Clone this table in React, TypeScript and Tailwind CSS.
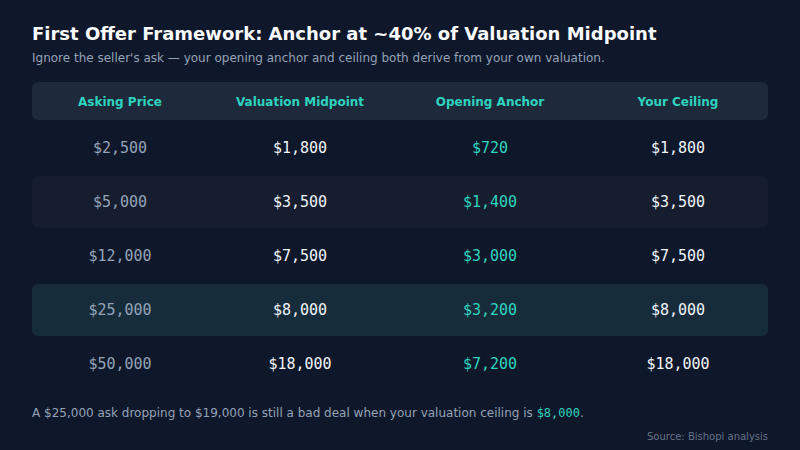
const rows = [
  { ask: "$2,500", mid: "$1,800", anchor: "$720", ceiling: "$1,800", tone: "none" },
  { ask: "$5,000", mid: "$3,500", anchor: "$1,400", ceiling: "$3,500", tone: "alt" },
  { ask: "$12,000", mid: "$7,500", anchor: "$3,000", ceiling: "$7,500", tone: "none" },
  { ask: "$25,000", mid: "$8,000", anchor: "$3,200", ceiling: "$8,000", tone: "hl" },
  { ask: "$50,000", mid: "$18,000", anchor: "$7,200", ceiling: "$18,000", tone: "none" },
];

const cols = "grid grid-cols-[176px_184px_196px_180px]";

export default function App() {
  return (
    <div className="w-[800px] h-[450px] bg-[#0f172a] px-8 pt-[22px] font-['DejaVu_Sans',sans-serif] overflow-hidden">
      <h1 className="text-[18px] leading-[24px] font-bold text-[#f8fafc]">
        First Offer Framework: Anchor at ~40% of Valuation Midpoint
      </h1>
      <p className="mt-[4px] text-[12px] leading-[16px] text-[#94a3b8]">
        Ignore the seller's ask — your opening anchor and ceiling both derive from your own valuation.
      </p>

      <div className="mt-[16px]">
        <div className={`${cols} h-[38px] items-center rounded-md bg-[#1e293b] pt-[1px] text-[12px] font-bold text-[#2dd4bf] text-center`}>
          <div>Asking Price</div>
          <div>Valuation Midpoint</div>
          <div>Opening Anchor</div>
          <div>Your Ceiling</div>
        </div>
        <div className="mt-[2px] flex flex-col gap-[2px] font-['DejaVu_Sans_Mono',monospace] text-[15px]">
          {rows.map((r) => (
            <div
              key={r.ask}
              className={`${cols} h-[52px] items-center rounded-md text-center ${
                r.tone === "alt" ? "bg-[#161d2e]" : r.tone === "hl" ? "bg-[#172c3b]" : ""
              }`}
            >
              <div className="text-[#94a3b8]">{r.ask}</div>
              <div className="text-[#f1f5f9]">{r.mid}</div>
              <div className="text-[#2dd4bf]">{r.anchor}</div>
              <div className="text-[#f1f5f9]">{r.ceiling}</div>
            </div>
          ))}
        </div>
      </div>

      <p className="mt-[15px] text-[12px] leading-[16px] text-[#94a3b8]">
        A $25,000 ask dropping to $19,000 is still a bad deal when your valuation ceiling is{" "}
        <span className="font-['DejaVu_Sans_Mono',monospace] text-[#2dd4bf]">$8,000</span>.
      </p>
      <p className="mt-[9px] text-right text-[10px] leading-[14px] text-[#64748b]">Source: Bishopi analysis</p>
    </div>
  );
}
